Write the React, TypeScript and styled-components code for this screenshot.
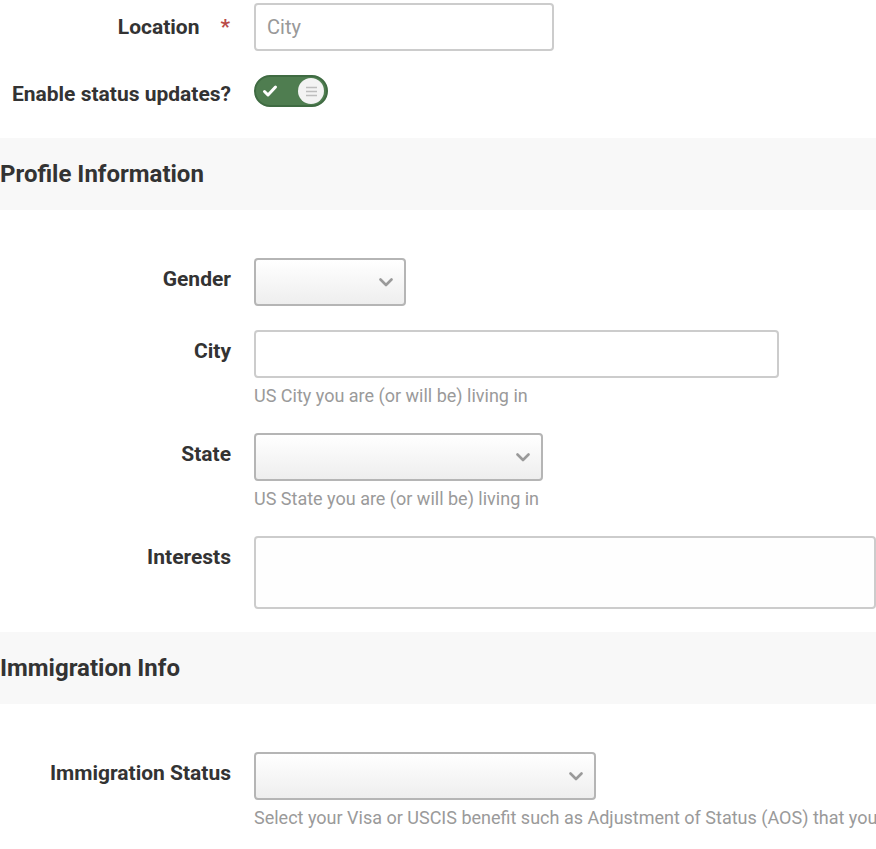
import styled, { createGlobalStyle } from "styled-components";

const GlobalStyle = createGlobalStyle`
  html, body {
    margin: 0;
    padding: 0;
    background: #ffffff;
    overflow: hidden;
  }
  body {
    font-family: Roboto, "Liberation Sans", sans-serif;
    color: #333333;
  }
`;

const Page = styled.form`
  width: 876px;
  padding-top: 3px;
  overflow: hidden;
`;

const FormGroup = styled.div<{ $gap?: number }>`
  display: flex;
  align-items: flex-start;
  margin-bottom: ${(p) => p.$gap ?? 24}px;
`;

const Label = styled.label`
  width: 231px;
  flex-shrink: 0;
  margin-right: 23px;
  padding-top: 10px;
  text-align: right;
  font-size: 21px;
  font-weight: 700;
  line-height: 22px;
  white-space: nowrap;
`;

const LocationLabel = styled(Label)`
  padding-top: 13px;
`;

const ToggleLabel = styled(Label)`
  padding-top: 8px;
`;

const Required = styled.span`
  color: #b94a48;
  margin-left: 21px;
  margin-right: 1px;
`;

const Control = styled.div`
  display: flex;
  flex-direction: column;
  min-width: 0;
`;

const TextInput = styled.input<{ $width: number }>`
  box-sizing: border-box;
  width: ${(p) => p.$width}px;
  height: 48px;
  padding: 0 11px;
  border: 2px solid #cccccc;
  border-radius: 4px;
  font-family: Roboto, "Liberation Sans", sans-serif;
  font-size: 20px;
  color: #555555;
  background: #ffffff;
  outline: none;
  &::placeholder {
    color: #999999;
  }
`;

const TextArea = styled.textarea`
  box-sizing: border-box;
  width: 660px;
  height: 73px;
  border: 2px solid #cccccc;
  border-radius: 4px;
  background: #fefefe;
  resize: none;
  outline: none;
`;

const SelectBox = styled.div<{ $width: number }>`
  box-sizing: border-box;
  width: ${(p) => p.$width}px;
  height: 48px;
  border: 2px solid #b5b5b5;
  border-radius: 4px;
  background: linear-gradient(#ffffff 0%, #eeeeee 100%);
  display: flex;
  align-items: center;
  justify-content: flex-end;
  padding-right: 11px;
`;

const Help = styled.div`
  margin-top: 6px;
  font-size: 18px;
  line-height: 24px;
  color: #9a9a9a;
  white-space: nowrap;
`;

const SectionHeader = styled.h3`
  margin: 0 0 48px;
  height: 72px;
  display: flex;
  align-items: center;
  background: #f8f8f8;
  font-size: 24px;
  font-weight: 700;
  color: #333333;
`;

const Toggle = styled.div`
  box-sizing: border-box;
  width: 74px;
  height: 32px;
  border-radius: 16px;
  background: #4f7d50;
  border: 2px solid #3f6b42;
  display: flex;
  align-items: center;
  justify-content: space-between;
  padding: 0 2px 0 6px;
`;

const Knob = styled.div`
  width: 26px;
  height: 26px;
  border-radius: 50%;
  background: #f3f3f3;
  display: flex;
  align-items: center;
  justify-content: center;
`;

const Chevron = () => (
  <svg width="14" height="9" viewBox="0 0 14 9">
    <path
      d="M1.5 1.5 L7 7 L12.5 1.5"
      fill="none"
      stroke="#9a9a9a"
      strokeWidth="2.6"
      strokeLinecap="round"
      strokeLinejoin="round"
    />
  </svg>
);

const Select = ({ width }: { width: number }) => (
  <SelectBox $width={width}>
    <Chevron />
  </SelectBox>
);

export default function App() {
  return (
    <>
      <GlobalStyle />
      <Page>
        <FormGroup>
          <LocationLabel>
            Location<Required>*</Required>
          </LocationLabel>
          <TextInput $width={300} placeholder="City" />
        </FormGroup>

        <FormGroup $gap={31}>
          <ToggleLabel>Enable status updates?</ToggleLabel>
          <Toggle>
            <svg width="16" height="14" viewBox="0 0 16 14">
              <path
                d="M2.5 7.5 L6 11 L13.5 3"
                fill="none"
                stroke="#ffffff"
                strokeWidth="3"
                strokeLinecap="round"
                strokeLinejoin="round"
              />
            </svg>
            <Knob>
              <svg width="13" height="11" viewBox="0 0 13 11">
                <path d="M1 1.5 H12 M1 5.5 H12 M1 9.5 H12" stroke="#bdbdbd" strokeWidth="1.5" />
              </svg>
            </Knob>
          </Toggle>
        </FormGroup>

        <SectionHeader>Profile Information</SectionHeader>

        <FormGroup>
          <Label>Gender</Label>
          <Select width={152} />
        </FormGroup>

        <FormGroup $gap={25}>
          <Label>City</Label>
          <Control>
            <TextInput $width={525} />
            <Help>US City you are (or will be) living in</Help>
          </Control>
        </FormGroup>

        <FormGroup $gap={25}>
          <Label>State</Label>
          <Control>
            <Select width={289} />
            <Help>US State you are (or will be) living in</Help>
          </Control>
        </FormGroup>

        <FormGroup $gap={23}>
          <Label>Interests</Label>
          <TextArea />
        </FormGroup>

        <SectionHeader>Immigration Info</SectionHeader>

        <FormGroup>
          <Label>Immigration Status</Label>
          <Control>
            <Select width={342} />
            <Help>Select your Visa or USCIS benefit such as Adjustment of Status (AOS) that you</Help>
          </Control>
        </FormGroup>
      </Page>
    </>
  );
}
